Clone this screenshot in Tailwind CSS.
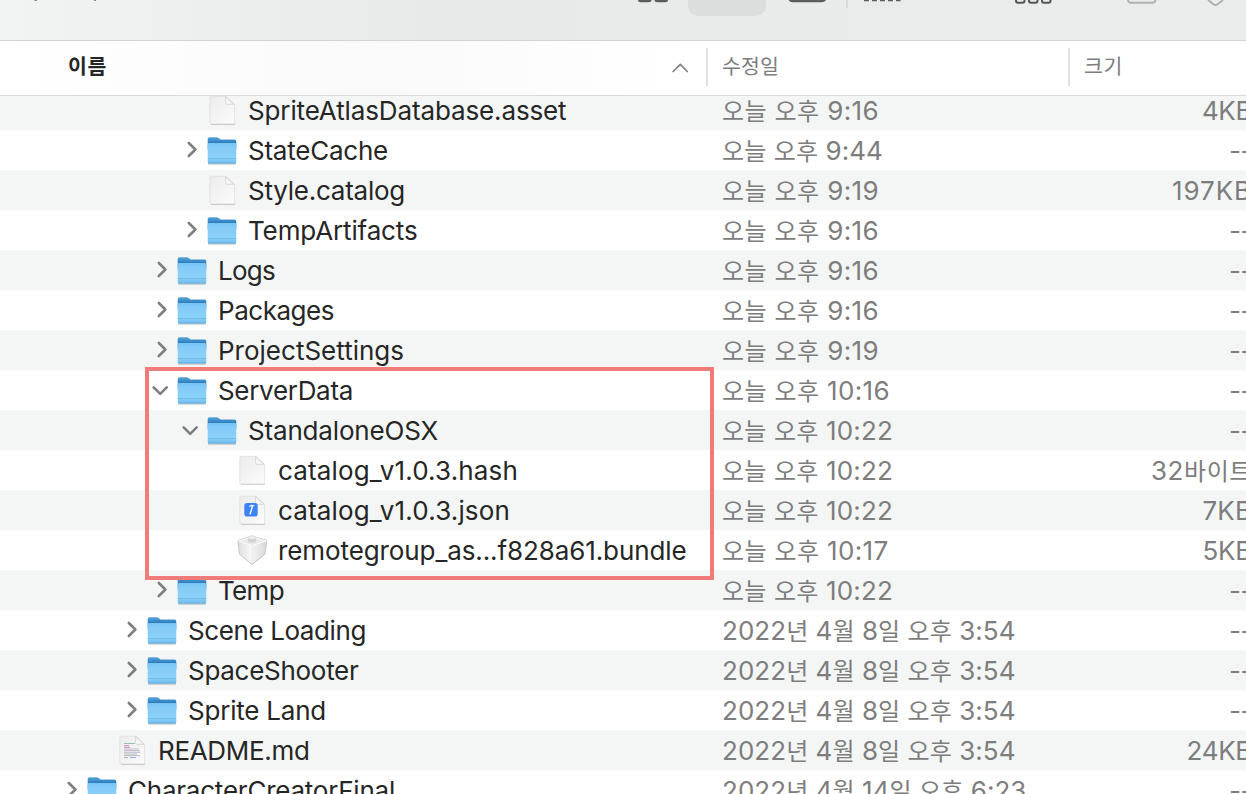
<!DOCTYPE html>
<html lang="ko">
<head>
<meta charset="utf-8">
<title>Finder</title>
<script src="https://cdn.jsdelivr.net/npm/@tailwindcss/browser@4"></script>
</head>
<body class="w-[1246px] h-[794px] overflow-hidden bg-white font-['Inter','Noto_Sans_CJK_KR',sans-serif] flex flex-col">

<svg class="absolute w-0 h-0">
  <defs>
    <linearGradient id="front" x1="0" y1="0" x2="0" y2="1"><stop offset="0" stop-color="#76c3f3"/><stop offset=".2" stop-color="#82cbf7"/><stop offset=".72" stop-color="#8bd2fb"/><stop offset="1" stop-color="#70bdee"/></linearGradient>
    <linearGradient id="back" x1="0" y1="0" x2="0" y2="1"><stop offset="0" stop-color="#57a6da"/><stop offset=".45" stop-color="#2f7fc0"/><stop offset="1" stop-color="#3483c4"/></linearGradient>
    <linearGradient id="paper" x1="0" y1="0" x2="1" y2="1"><stop offset="0" stop-color="#ececec"/><stop offset=".5" stop-color="#f3f3f3"/><stop offset="1" stop-color="#fcfcfc"/></linearGradient>
    <linearGradient id="curl" x1="0" y1="1" x2="1" y2="0"><stop offset="0" stop-color="#fff"/><stop offset="1" stop-color="#e4e4e4"/></linearGradient>
    <linearGradient id="brick" x1="0" y1="0" x2="1" y2="0"><stop offset="0" stop-color="#dedede"/><stop offset=".48" stop-color="#f8f8f8"/><stop offset=".52" stop-color="#f1f1f1"/><stop offset="1" stop-color="#d9d9d9"/></linearGradient>
    <symbol id="folder" viewBox="0 0 32 40">
      <path d="M2 33.400h28v1.200H2z" fill="#000" opacity=".25"/>
      <path d="M1.700 9q0-1.800 1.800-1.800h7q1 0 1.800.6l1.600 1.200q.7.500 1.600.5h13q1.800 0 1.800 1.800v8H1.700z" fill="url(#back)"/>
      <path d="M1.700 14.400q0-1.400 1.400-1.400h25.800q1.400 0 1.400 1.400v17.700q0 1.400-1.400 1.400H3.100q-1.400 0-1.400-1.400z" fill="url(#front)"/>
      <path d="M1.900 28.600h28.200" stroke="#5aa9dc" stroke-opacity=".65" stroke-width=".8"/>
      <path d="M2.200 33h27.600" stroke="#4f9fd4" stroke-opacity=".7" stroke-width=".8"/>
    </symbol>
    <symbol id="doc" viewBox="0 0 32 40">
      <path d="M5 34.300h23q.8 0 .8-.8" stroke="#000" stroke-opacity=".2" fill="none" stroke-width="1.200"/>
      <path d="M5.300 6.300H20l8.600 8v18.200q0 1.500-1.500 1.500H5.300q-1.500 0-1.500-1.500V7.800q0-1.500 1.500-1.500z" fill="url(#paper)" stroke="#d8d8d8" stroke-width=".6"/>
      <path d="M19.600 6.500v6.200q0 1.600 1.600 1.600h7.200z" fill="url(#curl)" stroke="#c4c4c4" stroke-width=".6"/>
    </symbol>
    <symbol id="json" viewBox="0 0 32 40">
      <use href="#doc" width="32" height="40"/>
      <rect x="8.300" y="13" width="13.400" height="13.600" rx="2.800" fill="#3a84f7"/>
      <path d="M16.600 15.800l-2.600 8.600" stroke="#fff" stroke-width="1.400"/>
      <path d="M13.400 16.500q2.400-1.700 4.900-.8" stroke="#fff" stroke-width="1.200" fill="none"/>
    </symbol>
    <symbol id="bundle" viewBox="0 0 32 40">
      <path d="M16 6.200L29.600 10q1 .3.900 1.400L29.300 23q-.1 1.200-1.100 1.900L17.200 33.600q-1.200.8-2.400 0L4.400 24.900q-1-.7-1.100-1.900L1.900 11.400q0-1.100 1-1.400z" fill="url(#brick)" stroke="#bdbdbd" stroke-width=".8"/>
      <path d="M2.500 10.900L16 15.800l13.800-4.900L16 6.500z" fill="#ececec" stroke="#fdfdfd" stroke-width=".8"/>
      <path d="M16 15.800V33" stroke="#e6e6e6" stroke-width=".8"/>
      <path d="M12 7.700v4q4 2.200 8.200 0v-4z" fill="#d2d2d2"/>
      <ellipse cx="16.100" cy="7.700" rx="4.100" ry="1.900" fill="#efefef" stroke="#c9c9c9" stroke-width=".6"/>
    </symbol>
    <symbol id="readme" viewBox="0 0 32 40">
      <use href="#doc" width="32" height="40"/>
      <g stroke-width=".9" fill="none" opacity=".7">
        <path d="M8 13.500h11" stroke="#58a29c"/><path d="M8 15.700h5M8 17.300h6" stroke="#d0509a"/>
        <path d="M8 19h15M8 20.600h16M8 24h13" stroke="#a2a2ae"/>
        <path d="M8 22.300h16" stroke="#a095c4"/><path d="M8 25.600h16" stroke="#999"/><path d="M8 27.600h4" stroke="#888"/><path d="M14 27.600h6" stroke="#5580d8"/>
      </g>
    </symbol>
  </defs>
</svg>

<header class="shrink-0 h-[41px] overflow-hidden border-b border-[#d3d4d4] bg-linear-to-r from-[#f2f4f3] via-[#e8eae9] via-35% to-[#ebedec]">
  <svg class="block w-[1246px] h-10" viewBox="0 0 1246 40" fill="none">
    <path d="M34.500 0h2.500M94 0h2" stroke="#666" stroke-width="1.500"/>
    <g fill="#5b5c5c">
      <path d="M638 0h13.500q0 2.200-3 2.200h-7.500q-3 0-3-2.200zM654.500 0H668q0 2.200-3 2.200h-7.500q-3 0-3-2.200z"/>
      <path d="M788.500 0H826q-1 2.300-4.500 2.300H793q-3.500 0-4.500-2.300z"/>
      <path d="M864 0h5v1.300h-5zM872 0h5v1.300h-5zM880 0h5v1.300h-5zM888 0h5v1.300h-5zM896 0h4.500v1.300H896z"/>
    </g>
    <path d="M688 0h78v4q0 12-12 12h-54q-12 0-12-12z" fill="#dcdedd"/>
    <path d="M847 0v8" stroke="#d9dbda" stroke-width="2"/>
    <path d="M1016 0v.8q0 2 2 2h4.500q2 0 2-2V0M1029 0v.8q0 2 2 2h4.500q2 0 2-2V0M1042 0v.8q0 2 2 2h4.500q2 0 2-2V0" stroke="#555" stroke-width="2"/>
    <path d="M1128 0q.300 2.800 3 2.800h21.500q2.700 0 3-2.800M1208 0l5.500 4.300q2 1.300 4 0L1223 0" stroke="#b0b2b1" stroke-width="2"/>
  </svg>
</header>

<div class="shrink-0 h-[55px] flex items-center border-b border-[#d9dada] bg-linear-to-r from-white via-[#fafafa] via-30% to-white to-55% text-[20.500px] text-[#7d7d7d]">
  <div class="w-[706px] h-full flex items-center justify-between pl-[68px] pr-[18px]">
    <span class="fit font-bold text-[#262626] -mt-[2px]" data-w="38">이름</span>
    <svg class="w-4 h-3 -mt-[1px]" viewBox="0 0 16 12" fill="none" stroke="#808080" stroke-width="1.700" stroke-linecap="round" stroke-linejoin="round"><path d="M1.200 9.500L8.300 2.400l7 7.100"/></svg>
  </div>
  <div class="w-[362px] h-[38px] -mt-[2px] flex items-center border-l-2 border-[#e0e2e1] pl-[14px]"><span class="fit" data-w="56">수정일</span></div>
  <div class="h-[38px] -mt-[2px] flex items-center border-l-2 border-[#e0e2e1] pl-[14px]"><span class="fit" data-w="38">크기</span></div>
</div>

<main class="relative flex-1 overflow-hidden">
  <div id="rows" class="-mt-[6px] w-[1252px]"></div>
  <div class="absolute left-[145px] top-[271px] w-[569px] h-[213px] border-4 border-[#f07b79]"></div>
</main>

<script>
// [icon, icon x, arrow, name, name width, date, date width, size, size width]
const rows = [
  ['doc',206,'','SpriteAtlasDatabase.asset',317.5,'오늘 오후 9:16',156,'4KB',49],
  ['folder',206,'closed','StateCache',139,'오늘 오후 9:44',160,'--',22],
  ['doc',206,'','Style.catalog',156,'오늘 오후 9:19',156,'197KB',79],
  ['folder',206,'closed','TempArtifacts',168.5,'오늘 오후 9:16',156,'--',22],
  ['folder',176,'closed','Logs',56,'오늘 오후 9:16',156,'--',22],
  ['folder',176,'closed','Packages',115,'오늘 오후 9:16',156,'--',22],
  ['folder',176,'closed','ProjectSettings',185,'오늘 오후 9:19',156,'--',22],
  ['folder',176,'open','ServerData',134,'오늘 오후 10:16',167,'--',22],
  ['folder',206,'open','StandaloneOSX',189,'오늘 오후 10:22',170,'--',22],
  ['doc',236,'','catalog_v1.0.3.hash',239,'오늘 오후 10:22',170,'32바이트',100],
  ['json',236,'','catalog_v1.0.3.json',231,'오늘 오후 10:22',170,'7KB',48.5],
  ['bundle',236,'','remotegroup_as...f828a61.bundle',407.5,'오늘 오후 10:17',165.5,'5KB',48.5],
  ['folder',176,'closed','Temp',65,'오늘 오후 10:22',170,'--',22],
  ['folder',146,'closed','Scene Loading',177,'2022년 4월 8일 오후 3:54',292.5,'--',22],
  ['folder',146,'closed','SpaceShooter',169.5,'2022년 4월 8일 오후 3:54',292.5,'--',22],
  ['folder',146,'closed','Sprite Land',137,'2022년 4월 8일 오후 3:54',292.5,'--',22],
  ['readme',116,'','README.md',150.5,'2022년 4월 8일 오후 3:54',292.5,'24KB',64.5],
  ['folder',86,'closed','CharacterCreatorFinal',266,'2022년 4월 14일 오후 6:23',303.5,'--',22],
];
const arrows = {
  '': '',
  closed: '<path d="M6.800 13l6.600 6.500-6.600 6.500"/>',
  open: '<path d="M1.700 17.300l6.500 6.500 6.500-6.500"/>',
};
const hangul = s => s.replace(/[가-힣]+/g, m => `<span class="text-[24px]">${m}</span>`);
document.getElementById('rows').innerHTML = rows.map(([icon, x, arrow, name, nw, date, dw, size, sw], i) => `
  <div class="h-10 flex items-center leading-[42px] text-[26px] font-[430] whitespace-nowrap ${i % 2 ? 'bg-white' : 'bg-[#f4f6f5]'}">
    <div class="w-[722px] h-10 shrink-0 flex items-center text-[#262626]" style="padding-left:${x - 24}px">
      <svg class="w-5 h-10 shrink-0 mr-1" viewBox="0 0 20 40" fill="none" stroke="#7f7f7f" stroke-width="2.600" stroke-linecap="round" stroke-linejoin="round">${arrows[arrow]}</svg>
      <svg class="w-8 h-10 shrink-0 mr-[10px]"><use href="#${icon}" width="32" height="40"/></svg>
      <span class="fit mt-[2px]" data-w="${nw}">${name}</span>
    </div>
    <div class="flex-1 h-10 text-[#7d7d7d]"><span class="fit" data-w="${dw}">${hangul(date)}</span></div>
    <div class="h-10 text-[#7d7d7d]"><span class="fit" data-w="${sw}">${hangul(size)}</span></div>
  </div>`).join('');
window.addEventListener('load', () => document.querySelectorAll('.fit').forEach(el => {
  const d = (+el.dataset.w + 1 - el.getBoundingClientRect().width) / el.textContent.length;
  el.style.letterSpacing = d.toFixed(3) + 'px';
}));
</script>
</body>
</html>
